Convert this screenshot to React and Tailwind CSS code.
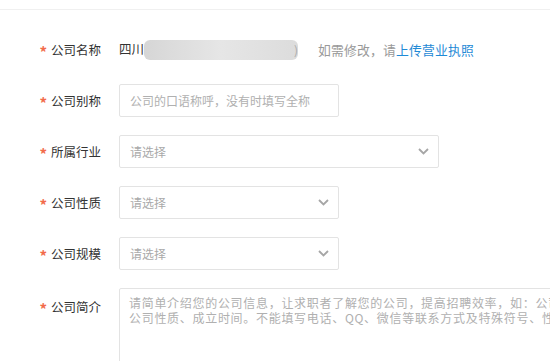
import React from 'react';

const font = { fontFamily: '"Noto Sans CJK SC", "Liberation Sans", sans-serif' };

const Chevron = () => (
  <svg className="w-[11px] h-[7px]" viewBox="0 0 11 7" fill="none" stroke="#a6a6a6" strokeWidth={1.8}>
    <path d="M1 1l4.5 4.5L10 1" />
  </svg>
);

const Label = ({ children, top }) => (
  <div className={`w-[101px] shrink-0 flex justify-end items-center gap-[4px] text-[12.5px] text-[#333] ${top ? 'self-start mt-[9px]' : ''}`}>
    <span className="text-[#f26b4b] text-[15px] font-bold leading-none mt-[4px]">*</span>
    <span className="leading-[16px]">{children}</span>
  </div>
);

const Select = ({ width }) => (
  <div className={`${width} h-[33px] border border-[#e3e3e3] rounded-[2px] bg-white flex items-center justify-between pl-[10px] pr-[9px]`}>
    <span className="text-[12px] text-[#a9a9a9]">请选择</span>
    <Chevron />
  </div>
);

export default function App() {
  return (
    <div className="w-[550px] h-[361px] overflow-hidden bg-white" style={font}>
      <div className="h-[10px] border-b border-[#f0f0f0]" />
      <div className="pt-[23px] flex flex-col gap-[18px]">
        {/* 公司名称 */}
        <div className="flex items-center gap-[18px] h-[33px]">
          <Label>公司名称</Label>
          <div className="flex items-center">
            <span className="text-[12.5px] text-[#333]">四川</span>
            <div className="w-[154px] h-[20px] rounded-[6px] bg-gradient-to-r from-[#d6d6d6] via-[#e6e6e6] to-[#dcdcdc]" />
            <span className="text-[12px] text-[#aaa] ml-[-4px]">)</span>
            <span className="ml-[20px] text-[12.8px] tracking-[0.2px] text-[#999]">如需修改，请</span>
            <span className="text-[12.8px] tracking-[0.2px] text-[#1f8ad6]">上传营业执照</span>
          </div>
        </div>

        {/* 公司别称 */}
        <div className="flex items-center gap-[18px]">
          <Label>公司别称</Label>
          <div className="w-[220px] h-[33px] border border-[#e3e3e3] rounded-[2px] flex items-center pl-[10px]">
            <span className="text-[12px] text-[#b0b0b0] whitespace-nowrap">公司的口语称呼，没有时填写全称</span>
          </div>
        </div>

        <div className="flex items-center gap-[18px]">
          <Label>所属行业</Label>
          <Select width="w-[320px]" />
        </div>

        <div className="flex items-center gap-[18px]">
          <Label>公司性质</Label>
          <Select width="w-[220px]" />
        </div>

        <div className="flex items-center gap-[18px]">
          <Label>公司规模</Label>
          <Select width="w-[220px]" />
        </div>

        {/* 公司简介 */}
        <div className="flex gap-[18px]">
          <Label top>公司简介</Label>
          <div className="w-[470px] h-[100px] shrink-0 border border-[#e3e3e3] rounded-[2px] pl-[9px] pt-[6px] overflow-hidden text-[12px] leading-[15px] tracking-[0.7px] text-[#b0b0b0] whitespace-nowrap">
            <div>请简单介绍您的公司信息，让求职者了解您的公司，提高招聘效率，如：公司主营业务、</div>
            <div>公司性质、成立时间。不能填写电话、QQ、微信等联系方式及特殊符号、性别歧视词等</div>
          </div>
        </div>
      </div>
    </div>
  );
}
